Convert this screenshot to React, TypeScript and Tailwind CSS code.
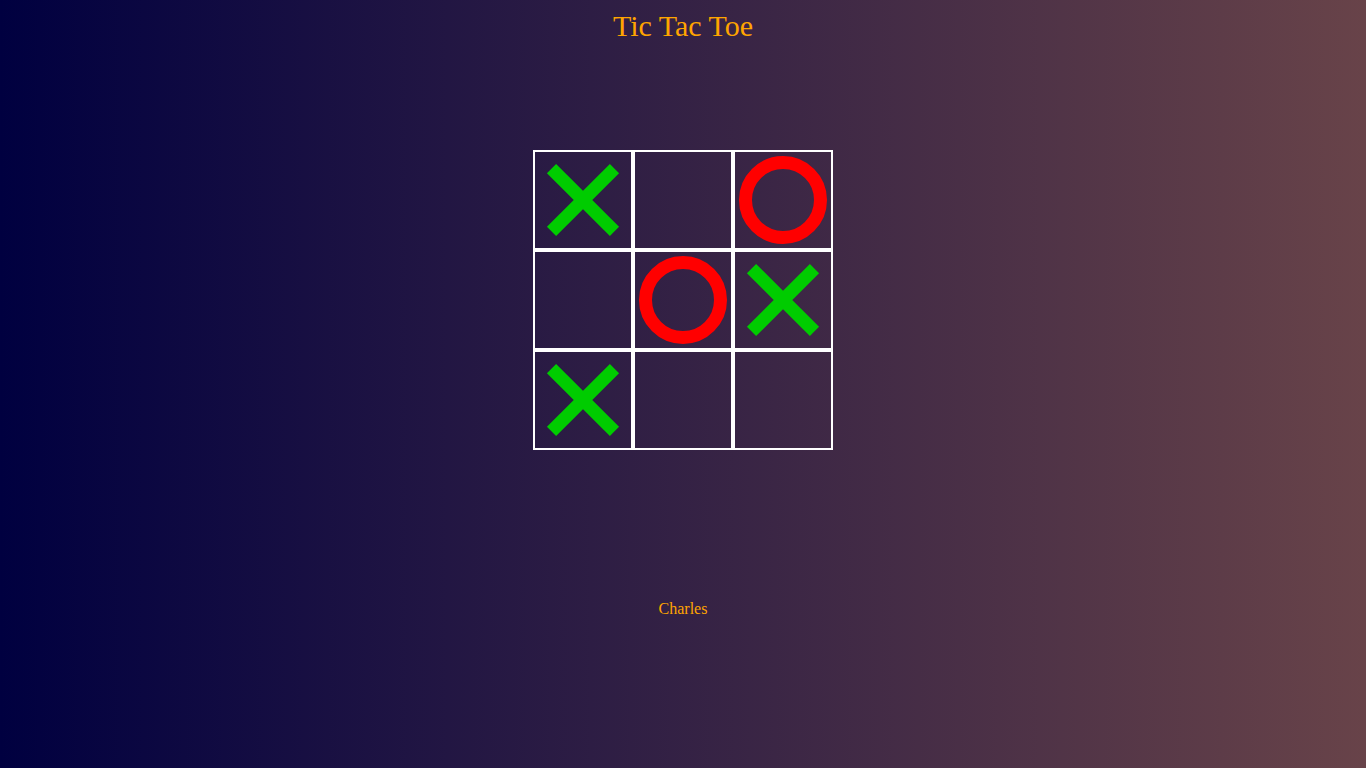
import { useState } from "react";

type Mark = "X" | "O" | null;

function Cross() {
  return (
    <div className="relative w-[72px] h-[72px]">
      <div className="absolute left-1/2 top-1/2 w-[89px] h-[13px] -translate-x-1/2 -translate-y-1/2 rotate-45 bg-[#00cc00]" />
      <div className="absolute left-1/2 top-1/2 w-[89px] h-[13px] -translate-x-1/2 -translate-y-1/2 -rotate-45 bg-[#00cc00]" />
    </div>
  );
}

function Circle() {
  return <div className="w-[88px] h-[88px] rounded-full border-[13px] border-[#ff0000]" />;
}

export default function App() {
  const [board, setBoard] = useState<Mark[]>(["X", null, "O", null, "O", "X", "X", null, null]);

  const handleClick = (i: number) => {
    if (board[i]) return;
    const xs = board.filter((b) => b === "X").length;
    const os = board.filter((b) => b === "O").length;
    const next = [...board];
    next[i] = xs > os ? "O" : "X";
    setBoard(next);
  };

  return (
    <div
      className="min-h-screen w-full flex flex-col items-center bg-[linear-gradient(to_right,#000040,#684349)] text-[#ffa500]"
      style={{ fontFamily: '"Liberation Serif", "Times New Roman", serif' }}
    >
      <h1 className="mt-[9px] text-[30px] leading-[34px]">Tic Tac Toe</h1>
      <div className="mt-[107px] grid grid-cols-[repeat(3,100px)] grid-rows-[repeat(3,100px)]">
        {board.map((mark, i) => (
          <div
            key={i}
            onClick={() => handleClick(i)}
            className="border-2 border-white flex items-center justify-center cursor-pointer"
          >
            {mark === "X" && <Cross />}
            {mark === "O" && <Circle />}
          </div>
        ))}
      </div>
      <p className="mt-[150px] text-[16px] leading-[18px]">Charles</p>
    </div>
  );
}
